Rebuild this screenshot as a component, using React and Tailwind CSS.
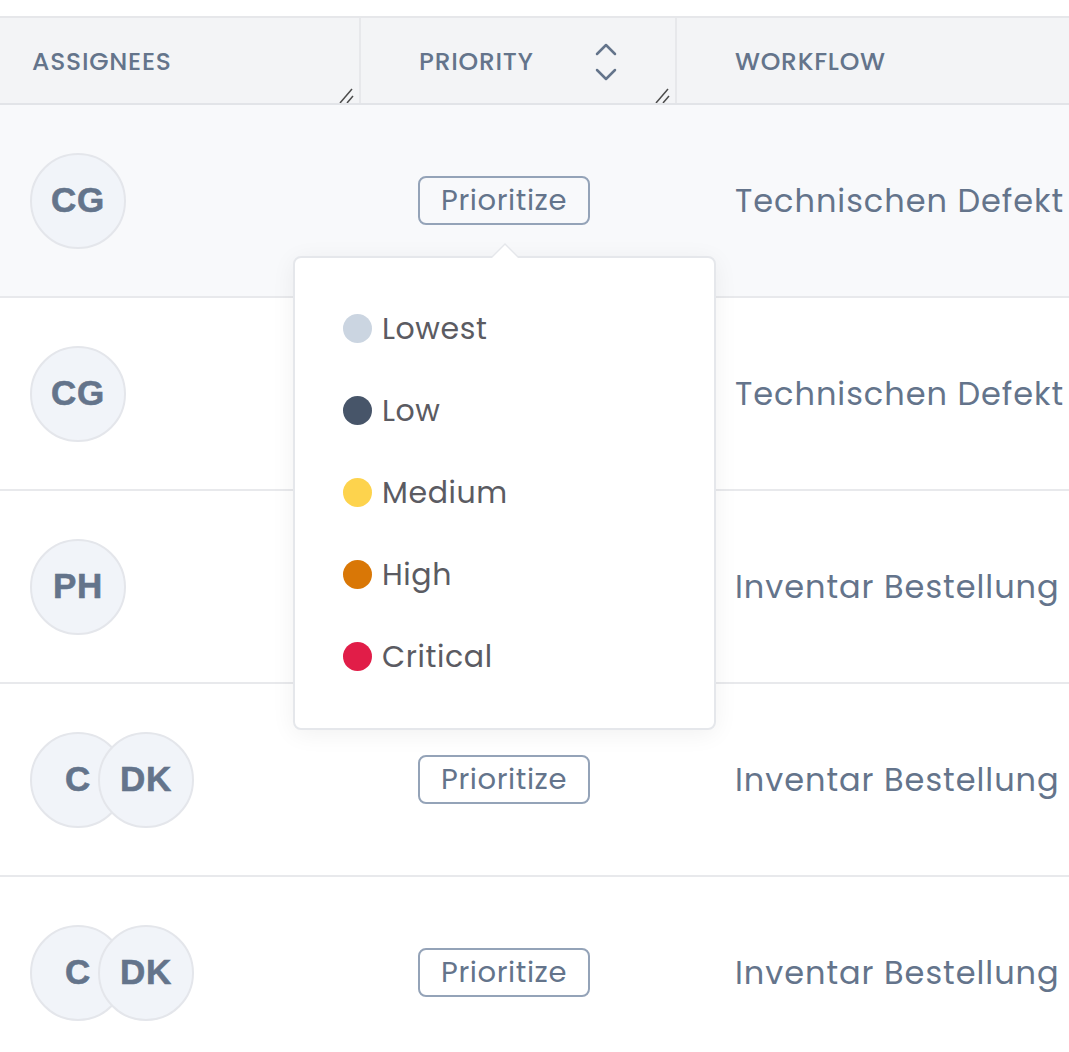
const ROWS = [
  { people: ["CG"], workflow: "Technischen Defekt", active: true },
  { people: ["CG"], workflow: "Technischen Defekt", hidden: true },
  { people: ["PH"], workflow: "Inventar Bestellung", hidden: true },
  { people: ["C", "DK"], workflow: "Inventar Bestellung" },
  { people: ["C", "DK"], workflow: "Inventar Bestellung" },
];

const LEVELS = [
  { label: "Lowest", dot: "bg-[#cbd5e1]" },
  { label: "Low", dot: "bg-[#475569]" },
  { label: "Medium", dot: "bg-[#fdd34d]" },
  { label: "High", dot: "bg-[#d97706]" },
  { label: "Critical", dot: "bg-[#e11d48]" },
];

function ResizeHandle() {
  return (
    <svg width="18" height="18" viewBox="0 0 18 18" className="absolute right-[4px] bottom-0 text-[#4b4b4b]">
      <path d="M3 18 L15 4" stroke="currentColor" strokeWidth="1.5" />
      <path d="M10 18 L16 11" stroke="currentColor" strokeWidth="1.5" />
    </svg>
  );
}

function Avatar({ initials, overlap }) {
  return (
    <div
      className={`w-[96px] h-[96px] rounded-full bg-[#f1f4f9] border-2 border-[#e4e6eb] flex items-center justify-center text-[35px] font-bold tracking-[0.02em] text-[#64748b] ${
        overlap ? "-ml-[28px]" : ""
      }`}
      style={{ fontFamily: '"Liberation Sans", Arial, sans-serif', WebkitTextStroke: "0.6px #64748b" }}
    >
      {initials}
    </div>
  );
}

function PriorityMenu() {
  return (
    <div className="absolute left-[-125px] top-[80px] w-[423px] z-10">
      <div className="absolute left-[198px] -top-[13px] w-0 h-0 border-l-[14px] border-r-[14px] border-b-[14px] border-l-transparent border-r-transparent border-b-[#e5e7eb]" />
      <div className="absolute left-[199px] -top-[11px] w-0 h-0 border-l-[13px] border-r-[13px] border-b-[13px] border-l-transparent border-r-transparent border-b-white" />
      <div className="bg-white border-2 border-[#e5e7eb] rounded-[8px] shadow-[0_4px_24px_rgba(0,0,0,0.06)] pt-[56px] pb-[58px] px-[48px] flex flex-col gap-[54px]">
        {LEVELS.map((l) => (
          <div key={l.label} className="flex items-center gap-[10px] h-[28px]">
            <span className={`w-[29px] h-[29px] rounded-full ${l.dot}`} />
            <span className="text-[30px] tracking-[0.02em] text-[#5b5b62]">{l.label}</span>
          </div>
        ))}
      </div>
    </div>
  );
}

export default function App() {
  return (
    <div
      className="w-[1069px] h-[1052px] overflow-hidden bg-white pt-[16px]"
      style={{ fontFamily: 'Poppins, "Open Sans", sans-serif' }}
    >
      <div className="border-t-2 border-[#e6e7ea]">
        {/* header */}
        <div className="grid grid-cols-[361px_316px_1fr] h-[87px] bg-[#f3f4f6] border-b-2 border-[#e2e4e8] text-[25px] font-medium text-[#64748b] tracking-[0.03em]">
          <div className="relative flex items-center pl-[32px] pt-[3px] border-r-2 border-[#e7e8eb]">
            ASSIGNEES
            <ResizeHandle />
          </div>
          <div className="relative flex items-center pl-[58px] pt-[3px] border-r-2 border-[#e7e8eb]">
            PRIORITY
            <svg width="24" height="40" viewBox="0 0 24 40" className="ml-[60px]" fill="none" stroke="#64748b" strokeWidth="2.5" strokeLinecap="round" strokeLinejoin="round">
              <path d="M3 12 L12 3 L21 12" />
              <path d="M3 28 L12 37 L21 28" />
            </svg>
            <ResizeHandle />
          </div>
          <div className="flex items-center pl-[58px] pt-[3px]">WORKFLOW</div>
        </div>

        {/* rows */}
        {ROWS.map((r, i) => (
          <div
            key={i}
            className={`grid grid-cols-[361px_316px_1fr] h-[193px] border-b-2 border-[#e8e9ec] ${
              r.active ? "bg-[#f8f9fb]" : "bg-white"
            }`}
          >
            <div className="flex items-center pl-[30px]">
              {r.people.map((p, j) => (
                <Avatar key={p} initials={p} overlap={j > 0} />
              ))}
            </div>
            <div className="flex items-center pl-[57px]">
              <div className="relative">
                {!r.hidden && (
                  <button className="h-[49px] w-[172px] rounded-[8px] border-2 border-[#94a3b8] text-[29px] tracking-[0.02em] text-[#64748b] flex items-center justify-center">
                    Prioritize
                  </button>
                )}
                {r.active && <PriorityMenu />}
              </div>
            </div>
            <div className="flex items-center pl-[58px] text-[32px] tracking-[0.03em] text-[#64748b] whitespace-nowrap">
              {r.workflow}
            </div>
          </div>
        ))}
      </div>
    </div>
  );
}
